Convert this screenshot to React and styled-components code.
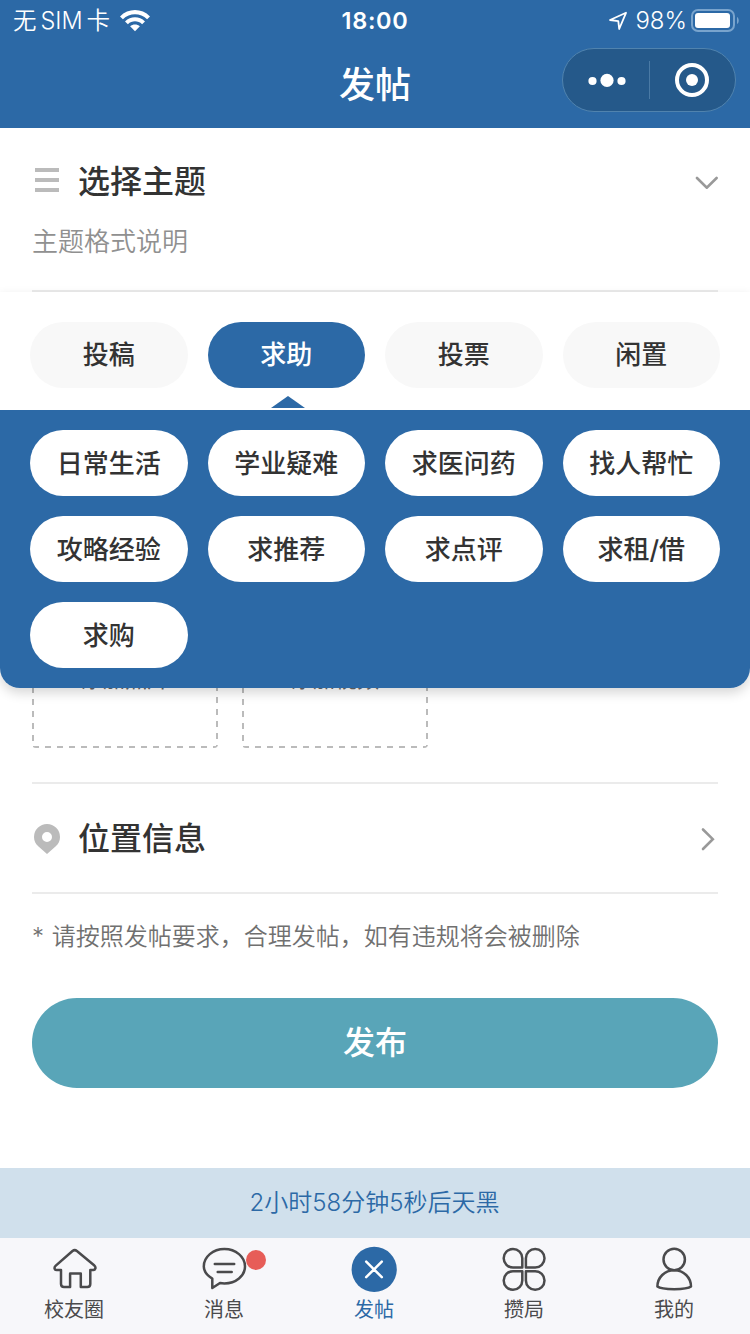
import React, { useState } from "react";
import styled, { createGlobalStyle } from "styled-components";

const GlobalStyle = createGlobalStyle`
  * {
    box-sizing: border-box;
  }
  body {
    margin: 0;
    background: #fff;
    font-family: Inter, "Noto Sans CJK SC", sans-serif;
    color: #333;
  }
  button {
    border: none;
    padding: 0;
    font-family: inherit;
    cursor: pointer;
  }
`;

const Page = styled.div`
  display: flex;
  flex-direction: column;
  width: 750px;
  height: 1334px;
  overflow: hidden;
`;

const Header = styled.header`
  height: 128px;
  background: #2c69a6;
  color: #fff;
`;
const StatusBar = styled.div`
  display: grid;
  grid-template-columns: 1fr auto 1fr;
  align-items: center;
  height: 40px;
  padding: 0 11px 0 13px;
`;
const StatusLeft = styled.div`
  display: flex;
  align-items: center;
  gap: 10px;
`;
const Carrier = styled.span`
  font-size: 23.5px;
  line-height: 42px;
  font-weight: 350;
  word-spacing: -2.7px;
`;
const Clock = styled.span`
  margin-right: 2px;
  font-size: 23.5px;
  line-height: 42px;
  font-weight: 600;
  letter-spacing: 0.7px;
`;
const StatusRight = styled.div`
  display: flex;
  align-items: center;
  justify-content: flex-end;
`;
const Battery = styled.span`
  margin: 0 4px 0 8px;
  font-size: 24px;
  line-height: 42px;
  font-weight: 350;
`;
const NavBar = styled.div`
  display: grid;
  grid-template-columns: 1fr auto 1fr;
  height: 88px;
  padding: 8px 14px;
`;
const NavTitle = styled.h1`
  grid-column: 2;
  margin: 0;
  font-size: 36px;
  line-height: 74px;
  font-weight: 500;
`;
const Capsule = styled.div`
  justify-self: end;
  display: flex;
  align-items: center;
  width: 174px;
  height: 64px;
  border: 1px solid #5083ae;
  border-radius: 32px;
  background: #25598a;
`;
const CapsuleButton = styled.button`
  display: flex;
  align-items: center;
  justify-content: center;
  width: 86px;
  height: 38px;
  padding-left: 2px;
  background: none;
  & + & {
    padding: 0 2px 0 0;
    border-left: 1px solid #4a7aa5;
  }
`;

const Section = styled.section`
  margin: 0 32px;
  border-bottom: 2px solid #ebebeb;
`;
const ThemeSection = styled(Section)`
  height: 164px;
  flex: none;
  padding-top: 26px;
`;
const SectionRow = styled.div`
  display: flex;
  align-items: center;
  height: 56px;
`;
const SectionTitle = styled.h2`
  flex: 1;
  margin: 0 0 0 16px;
  font-size: 32px;
  line-height: 48px;
  font-weight: 500;
`;
const ThemeDesc = styled.p`
  margin: 12px 0 0;
  font-size: 26px;
  line-height: 40px;
  font-weight: 350;
  color: #909090;
`;

const DropdownAnchor = styled.div`
  position: relative;
  z-index: 2;
`;
const Dropdown = styled.div`
  position: absolute;
  top: 0;
  left: 0;
  width: 100%;
  border-radius: 0 0 20px 20px;
  background: #fff;
  box-shadow: 0 5px 12px rgba(0, 0, 0, 0.16);
`;
const PillGrid = styled.div`
  display: grid;
  grid-template-columns: repeat(4, 1fr);
  gap: 20px;
`;
const TabGrid = styled(PillGrid)`
  height: 118px;
  padding: 30px 30px 22px;
`;
const SubGrid = styled(PillGrid)`
  padding: 20px 30px;
  border-radius: 0 0 20px 20px;
  background: #2c69a6;
`;
const Pill = styled.button`
  position: relative;
  height: 66px;
  border-radius: 33px;
  padding-bottom: ${(props) => (props.$muted ? "5px" : "4px")};
  font-size: 26px;
  font-weight: 500;
  color: ${(props) => (props.$active ? "#fff" : "#333")};
  background: ${(props) =>
    props.$active ? "#2c69a6" : props.$muted ? "#f8f8f8" : "#fff"};
`;
const Arrow = styled.span`
  position: absolute;
  top: 74px;
  left: 63px;
  border: solid transparent;
  border-width: 0 17px 12px;
  border-bottom-color: #2c69a6;
`;

const UploadSection = styled(Section)`
  display: flex;
  align-items: flex-end;
  gap: 24px;
  height: 492px;
  flex: none;
  padding-bottom: 34px;
`;
/* 6px dashes with 6px gaps, one gradient per side */
const UploadBox = styled.div`
  display: flex;
  align-items: flex-end;
  justify-content: center;
  width: 186px;
  height: 186px;
  padding-bottom: 54px;
  border-radius: 4px;
  background-image: linear-gradient(90deg, #bbb 50%, transparent 50%),
    linear-gradient(90deg, #bbb 50%, transparent 50%),
    linear-gradient(#bbb 50%, transparent 50%),
    linear-gradient(#bbb 50%, transparent 50%);
  background-size: 12px 2px, 12px 2px, 2px 12px, 2px 12px;
  background-position: 1px 0, 1px 100%, 0 5px, 100% 3px;
  background-repeat: repeat-x, repeat-x, repeat-y, repeat-y;
  font-size: 22px;
  line-height: 30px;
  color: #666;
`;
const LocationSection = styled(Section)`
  height: 110px;
  flex: none;
  padding-top: 27px;
`;
const Note = styled.p`
  margin: 25px 32px 0;
  font-size: 24px;
  line-height: 36px;
  font-weight: 350;
  word-spacing: 1px;
  color: #707070;
`;
const SubmitButton = styled.button`
  flex: none;
  height: 90px;
  margin: 43px 32px 80px;
  padding-bottom: 7px;
  border-radius: 45px;
  background: #59a5b8;
  color: #fff;
  font-size: 32px;
  font-weight: 500;
`;
const Countdown = styled.div`
  height: 70px;
  flex: none;
  padding-right: 1px;
  background: #d0e0ec;
  color: #2c69a6;
  font-size: 24px;
  line-height: 69px;
  font-weight: 350;
  text-align: center;
`;
const TabBar = styled.nav`
  display: grid;
  grid-template-columns: repeat(5, 150px);
  height: 96px;
  flex: none;
  margin-left: -1px;
  background: #f7f7fa;
  box-shadow: 1px 0 0 #f7f7fa;
`;
const TabItem = styled.a`
  position: relative;
  display: flex;
  flex-direction: column;
  align-items: center;
  padding-top: 8px;
  font-size: 20px;
  line-height: 30px;
  color: ${(props) => (props.$active ? "#2c69a6" : "#4a4a4c")};
  svg {
    display: block;
    margin-bottom: 3px;
  }
`;
const Badge = styled.i`
  position: absolute;
  top: 12px;
  left: 97px;
  width: 20px;
  height: 20px;
  border-radius: 50%;
  background: #e75d58;
`;

const WifiIcon = () => (
  <svg width="30" height="22" viewBox="0 0 30 22" fill="#fff">
    <path d="M0 6.4C8.3-2.1 21.7-2.1 30 6.4L27.1 9.3C20.4 2.7 9.6 2.7 2.9 9.3Z" />
    <path d="M5 11.4C10.7 5.9 19.3 5.9 25 11.4L22.1 14.2C18 10.4 12 10.4 7.9 14.2Z" />
    <path d="M10.1 16.3C12.9 13.8 17.1 13.8 19.9 16.3L15 21.2Z" />
  </svg>
);

const LocateIcon = () => (
  <svg width="19" height="20" viewBox="0 0 19 20">
    <path
      d="M2 9L18 1.8L11.2 18L10.3 10.2Z"
      fill="none"
      stroke="#fff"
      strokeWidth="1.8"
      strokeLinejoin="round"
    />
  </svg>
);

const BatteryIcon = () => (
  <svg width="48" height="24" viewBox="0 0 48 24">
    <rect x="1" y="1" width="42" height="21" rx="6" fill="none" stroke="#79a4cd" strokeWidth="2" />
    <rect x="4" y="4" width="35" height="15" rx="3" fill="#fff" />
    <path d="M46 8C48.3 9 48.3 14 46 15Z" fill="#79a4cd" />
  </svg>
);

const MoreIcon = () => (
  <svg width="38" height="14" viewBox="0 0 38 14" fill="#fff">
    <circle cx="4.5" cy="8" r="4.1" />
    <circle cx="19" cy="7.4" r="6.6" />
    <circle cx="33.5" cy="8" r="4.1" />
  </svg>
);

const TargetIcon = () => (
  <svg width="34" height="34" viewBox="0 0 34 34">
    <circle cx="17" cy="17" r="15" fill="none" stroke="#fff" strokeWidth="4" />
    <circle cx="17" cy="17" r="6" fill="#fff" />
  </svg>
);

const ListIcon = () => (
  <svg width="30" height="30" viewBox="0 0 30 30" fill="#bbb">
    <path d="M3 1h24v4H3zM3 11h24v4H3zM3 21h24v4H3z" />
  </svg>
);

const PinIcon = () => (
  <svg width="30" height="30" viewBox="0 0 30 30">
    <path
      d="M15 0A13 13 0 0 1 28 13C28 17 26.5 20 23.5 22.5L15 30L6.5 22.5C3.5 20 2 17 2 13A13 13 0 0 1 15 0ZM15 8a5 5 0 1 0 0 10a5 5 0 0 0 0-10Z"
      fill="#bbb"
    />
  </svg>
);

const ChevronDown = () => (
  <svg width="24" height="14" viewBox="0 0 24 14">
    <path d="M3 3L12.8 12.7L22.6 3" fill="none" stroke="#999" strokeWidth="2.6" strokeLinecap="round" />
  </svg>
);

const ChevronRight = () => (
  <svg width="17" height="24" viewBox="0 0 17 24">
    <path d="M2 2.5L11.8 12.2L2 22" fill="none" stroke="#999" strokeWidth="2.6" strokeLinecap="round" />
  </svg>
);

const TabSvg = ({ children }) => (
  <svg
    width="46"
    height="46"
    viewBox="0 0 46 46"
    fill="none"
    stroke="#4a4a4c"
    strokeWidth="2.5"
    strokeLinecap="round"
    strokeLinejoin="round"
  >
    {children}
  </svg>
);

const HomeIcon = () => (
  <TabSvg>
    <path d="M21.5 5Q23.7 3.3 25.9 5L43.1 19.3C45.4 21.3 44.6 24 42.1 24H39.3V38Q39.3 41 36.3 41H29.8V27.5H19.1V41H13Q10 41 10 38V24H5.8C3.2 24 2.8 21.4 4.8 19.6Z" />
  </TabSvg>
);

const MessageIcon = () => (
  <TabSvg>
    <path d="M11.3 42V32.6C6 29.4 2.8 25.2 2.8 20.4C2.8 10.9 12 3 23.4 3S44 10.9 44 20.4S34.9 37.4 23.4 37.4C21.9 37.4 20.5 37.3 19 37Z" />
    <path d="M13.8 18H33.2M16.7 26H30.7" />
  </TabSvg>
);

const CloseIcon = () => (
  <svg width="46" height="46" viewBox="0 0 46 46">
    <circle cx="23.2" cy="23.4" r="22.6" fill="#2c69a6" />
    <path d="M15.2 15.6L30.8 31.2M30.8 15.6L15.2 31.2" stroke="#fff" strokeWidth="2.5" strokeLinecap="round" />
  </svg>
);

const CloverIcon = () => (
  <TabSvg>
    <path d="M21.3 21.6H12A9.3 9.3 0 1 1 21.3 12.3Z" />
    <path d="M24.9 21.6H34.2A9.3 9.3 0 1 0 24.9 12.3Z" />
    <path d="M21.3 25.2H12A9.3 9.3 0 1 0 21.3 34.5Z" />
    <path d="M24.9 25.2H34.2A9.3 9.3 0 1 1 24.9 34.5Z" />
  </TabSvg>
);

const UserIcon = () => (
  <TabSvg>
    <circle cx="23.2" cy="13.5" r="10.7" />
    <path d="M23.2 24.2C13.7 24.2 6.4 31.5 6.4 40.6C10.7 44 35.7 44 40 40.6C40 31.5 32.7 24.2 23.2 24.2Z" />
  </TabSvg>
);

const topics = ["投稿", "求助", "投票", "闲置"];
const subTopics = [
  "日常生活",
  "学业疑难",
  "求医问药",
  "找人帮忙",
  "攻略经验",
  "求推荐",
  "求点评",
  "求租/借",
  "求购",
];
const tabs = [
  { label: "校友圈", icon: <HomeIcon /> },
  { label: "消息", icon: <MessageIcon />, badge: true },
  { label: "发帖", icon: <CloseIcon />, active: true },
  { label: "攒局", icon: <CloverIcon /> },
  { label: "我的", icon: <UserIcon /> },
];

export default function App() {
  const [topic, setTopic] = useState("求助");

  return (
    <>
      <GlobalStyle />
      <Page>
        <Header>
          <StatusBar>
            <StatusLeft>
              <Carrier>无 SIM 卡</Carrier>
              <WifiIcon />
            </StatusLeft>
            <Clock>18:00</Clock>
            <StatusRight>
              <LocateIcon />
              <Battery>98%</Battery>
              <BatteryIcon />
            </StatusRight>
          </StatusBar>
          <NavBar>
            <NavTitle>发帖</NavTitle>
            <Capsule>
              <CapsuleButton>
                <MoreIcon />
              </CapsuleButton>
              <CapsuleButton>
                <TargetIcon />
              </CapsuleButton>
            </Capsule>
          </NavBar>
        </Header>

        <ThemeSection>
          <SectionRow>
            <ListIcon />
            <SectionTitle>选择主题</SectionTitle>
            <ChevronDown />
          </SectionRow>
          <ThemeDesc>主题格式说明</ThemeDesc>
        </ThemeSection>

        <DropdownAnchor>
          <Dropdown>
            <TabGrid>
              {topics.map((item) => (
                <Pill
                  key={item}
                  $muted
                  $active={item === topic}
                  onClick={() => setTopic(item)}
                >
                  {item}
                  {item === topic && <Arrow />}
                </Pill>
              ))}
            </TabGrid>
            <SubGrid>
              {subTopics.map((item) => (
                <Pill key={item}>{item}</Pill>
              ))}
            </SubGrid>
          </Dropdown>
        </DropdownAnchor>

        <UploadSection>
          <UploadBox>添加照片</UploadBox>
          <UploadBox>添加视频</UploadBox>
        </UploadSection>
        <LocationSection>
          <SectionRow>
            <PinIcon />
            <SectionTitle>位置信息</SectionTitle>
            <ChevronRight />
          </SectionRow>
        </LocationSection>
        <Note>* 请按照发帖要求，合理发帖，如有违规将会被删除</Note>
        <SubmitButton>发布</SubmitButton>
        <Countdown>2小时58分钟5秒后天黑</Countdown>
        <TabBar>
          {tabs.map((tab) => (
            <TabItem key={tab.label} $active={tab.active}>
              {tab.icon}
              {tab.label}
              {tab.badge && <Badge />}
            </TabItem>
          ))}
        </TabBar>
      </Page>
    </>
  );
}
